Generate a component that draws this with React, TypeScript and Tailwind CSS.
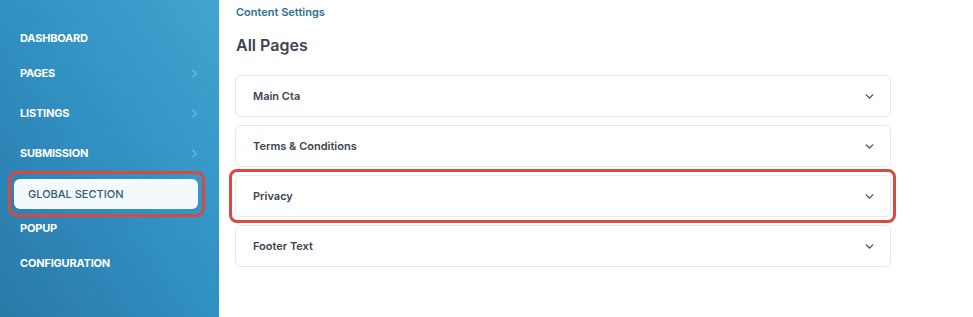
import React from "react";
import { ChevronRight, ChevronDown } from "lucide-react";

const font = { fontFamily: "Inter, 'Open Sans', 'Liberation Sans', sans-serif" };

function NavItem({ label, h, chevron }: { label: string; h: string; chevron?: boolean }) {
  return (
    <div className={`flex items-center justify-between pl-[20px] pr-[20px] ${h}`}>
      <span className="text-[11px] font-bold tracking-[-0.2px] text-white">{label}</span>
      {chevron && <ChevronRight size={13} strokeWidth={1.5} className="-mr-[2px] text-white/70" />}
    </div>
  );
}

function Card({ label, highlight }: { label: string; highlight?: boolean }) {
  return (
    <div className="relative flex h-[42px] items-center justify-between rounded-[6px] border border-[#e6e8eb] bg-white pl-[17px] pr-[14px]">
      <span className="text-[11px] font-semibold text-[#3d4350]">{label}</span>
      <ChevronDown size={13} strokeWidth={2.6} className="text-[#4a4f58]" />
      {highlight && (
        <div className="pointer-events-none absolute -top-[7px] -bottom-[7px] -left-[7px] -right-[6px] rounded-[8px] border-[3px] border-[#d8493f]" />
      )}
    </div>
  );
}

export default function App() {
  return (
    <div className="flex h-[317px] w-[973px] overflow-hidden bg-white" style={font}>
      <aside className="flex w-[219px] shrink-0 flex-col bg-gradient-to-tr from-[#2979a8] via-[#3190c2] to-[#42a4d0] pt-[21px]">
        <NavItem label="DASHBOARD" h="h-[34px]" />
        <NavItem label="PAGES" h="h-[36px]" chevron />
        <NavItem label="LISTINGS" h="h-[44px]" chevron />
        <NavItem label="SUBMISSION" h="h-[36px]" chevron />
        <div className="flex h-[46px] items-center pl-[14px] pr-[21px]">
          <div className="relative flex h-[30px] w-full items-center rounded-[6px] bg-[#f4f9fc] pl-[14px]">
            <span className="text-[11px] font-medium text-[#2f5b75]">GLOBAL SECTION</span>
            <div className="pointer-events-none absolute -top-[8px] -bottom-[8px] -left-[6px] -right-[7px] rounded-[9px] border-[3px] border-[#d8493f]" />
          </div>
        </div>
        <NavItem label="POPUP" h="h-[22px]" />
        <NavItem label="CONFIGURATION" h="h-[48px]" />
      </aside>
      <main className="flex flex-1 flex-col border-l border-[#f0f1f2] pl-[15px] pr-[82px]">
        <div className="mt-[4px] h-[16px] pl-[1px] text-[11px] font-semibold leading-[16px] text-[#2e6f8c]">Content Settings</div>
        <div className="mt-[14px] h-[22px] pl-[1px] text-[16px] font-semibold leading-[22px] text-[#3d4350]">All Pages</div>
        <div className="mt-[19px] flex flex-col gap-[8px]">
          <Card label="Main Cta" />
          <Card label="Terms & Conditions" />
          <Card label="Privacy" highlight />
          <Card label="Footer Text" />
        </div>
      </main>
    </div>
  );
}
